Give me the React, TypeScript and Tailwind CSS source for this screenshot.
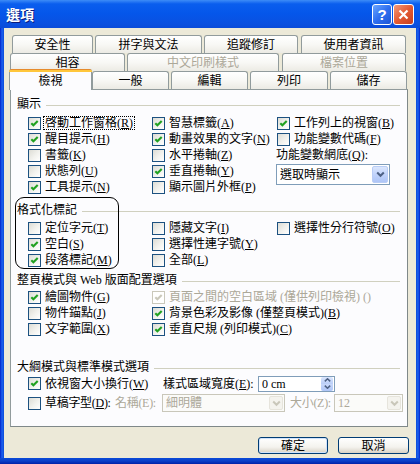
import React from "react";

type OptProps = {
  label: string;
  acc?: string;
  checked?: boolean;
  disabled?: boolean;
  focus?: boolean;
  tail?: string;
};

function Check({ checked = false, disabled = false }: { checked?: boolean; disabled?: boolean }) {
  return (
    <span
      className={
        disabled
          ? "flex h-[13px] w-[13px] shrink-0 items-center justify-center border border-[#cac8bb] bg-white"
          : "flex h-[13px] w-[13px] shrink-0 items-center justify-center border border-[#1c5180] bg-[linear-gradient(135deg,#dcdcd5_0%,#f2f2ee_55%,#ffffff_100%)]"
      }
    >
      {checked && (
        <svg width="11" height="11" viewBox="0 0 11 11">
          <path
            d="M2.3 5.2 L4.4 7.3 L8.7 3"
            fill="none"
            stroke={disabled ? "#cac8bb" : "#21a121"}
            strokeWidth="2.1"
          />
        </svg>
      )}
    </span>
  );
}

function Opt({ label, acc, checked, disabled, focus, tail }: OptProps) {
  const text = (
    <>
      {label}
      {acc ? (
        <>
          (<u>{acc}</u>)
        </>
      ) : null}
      {tail}
    </>
  );
  return (
    <div className="flex h-[16px] items-center whitespace-nowrap">
      <Check checked={checked} disabled={disabled} />
      {focus ? (
        <span className="ml-[2px] flex h-[14px] items-center border border-dotted border-black px-[1px] leading-[12px]">
          {text}
        </span>
      ) : (
        <span className={disabled ? "ml-[4px] text-[#aca899]" : "ml-[4px] text-black"}>{text}</span>
      )}
    </div>
  );
}

function GroupLabel({ text }: { text: string }) {
  return (
    <div className="flex h-[16px] items-center pl-[6px] pr-[7px]">
      <span className="whitespace-nowrap">{text}</span>
      <div className="ml-[5px] mt-[2px] h-px flex-1 bg-[#d0d0bf]" />
    </div>
  );
}

function Chevron({ color }: { color: string }) {
  return (
    <svg width="9" height="7" viewBox="0 0 9 7">
      <path d="M1.2 1.5 L4.5 4.8 L7.8 1.5" fill="none" stroke={color} strokeWidth="2" />
    </svg>
  );
}

function Tab({ label, className, grey }: { label: string; className: string; grey?: boolean }) {
  return (
    <div
      className={`flex h-[18px] shrink-0 items-center justify-center rounded-t-[3px] border border-b-0 border-[#919b9c] bg-[linear-gradient(180deg,#ffffff_0%,#f8f8f5_50%,#ecebe4_100%)] ${
        grey ? "text-[#aca899]" : "text-black"
      } ${className}`}
    >
      {label}
    </div>
  );
}

export default function App() {
  return (
    <div className="flex h-[464px] w-[420px] flex-col overflow-hidden bg-[#0b4fe0] font-['Liberation_Serif','Noto_Sans_CJK_TC','Noto_Sans_CJK_SC',serif] text-[12px] leading-[16px] text-black">
      {/* Title bar */}
      <div className="flex h-[28px] shrink-0 items-center bg-[linear-gradient(180deg,#3d8cf7_0%,#0a5eee_14%,#0556ea_50%,#0a50e0_85%,#0a4bd9_100%)] pl-[6px] pr-[6px]">
        <span className="font-['Noto_Sans_CJK_TC',sans-serif] text-[14px] font-bold leading-[16px] text-white [text-shadow:1px_1px_0_#0a1a7a]">
          選項
        </span>
        <div className="flex-1" />
        <div className="flex h-[21px] w-[20px] items-center justify-center rounded-[3px] border border-white bg-[linear-gradient(135deg,#6aa6ff_0%,#2f6ff0_50%,#1c55d6_100%)]">
          <span className="font-['Liberation_Sans',sans-serif] text-[15px] font-bold leading-[15px] text-white">?</span>
        </div>
        <div className="ml-[1px] flex h-[21px] w-[21px] items-center justify-center rounded-[3px] border border-white bg-[linear-gradient(135deg,#f39a7a_0%,#e35a33_50%,#c8401f_100%)]">
          <svg width="11" height="11" viewBox="0 0 11 11">
            <path d="M1.5 1.5 L9.5 9.5 M9.5 1.5 L1.5 9.5" stroke="#ffffff" strokeWidth="2.2" />
          </svg>
        </div>
      </div>

      {/* Middle */}
      <div className="flex h-[430px] shrink-0">
        <div className="w-[4px] bg-[linear-gradient(90deg,#0021c8,#1c61ef_50%,#0a4ad8)]" />
        <div className="flex w-[412px] flex-col bg-[#ece9d8] pt-[7px]">
          {/* Tab row 1 */}
          <div className="flex h-[18px]">
            <Tab label="安全性" className="ml-[8px] w-[81px]" />
            <Tab label="拼字與文法" className="ml-[2px] w-[107px]" />
            <Tab label="追蹤修訂" className="ml-[2px] w-[94px]" />
            <Tab label="使用者資訊" className="ml-[3px] w-[105px]" />
          </div>
          {/* Tab row 2 */}
          <div className="flex h-[18px]">
            <Tab label="相容" className="ml-[6px] w-[115px]" />
            <Tab label="中文印刷樣式" className="ml-[2px] w-[152px]" grey />
            <Tab label="檔案位置" className="ml-[3px] w-[124px]" grey />
          </div>
          {/* Tab row 3 */}
          <div className="flex h-[18px] items-end">
            <div className="relative z-10 -mb-px ml-[5px] flex h-[21px] w-[83px] shrink-0 flex-col rounded-t-[3px] border border-b-0 border-[#919b9c] bg-[#fcfcfe]">
              <div className="-mx-px -mt-px h-[3px] rounded-t-[3px] bg-[linear-gradient(180deg,#e68b2c_0%,#e68b2c_34%,#ffc73c_34%,#ffc73c_100%)]" />
              <div className="flex flex-1 items-center justify-center">檢視</div>
            </div>
            <Tab label="一般" className="w-[77px]" />
            <Tab label="編輯" className="ml-[2px] w-[77px]" />
            <Tab label="列印" className="ml-[2px] w-[78px]" />
            <Tab label="儲存" className="ml-[2px] w-[77px]" />
          </div>

          {/* Panel */}
          <div className="relative ml-[6px] flex h-[338px] w-[398px] flex-col border border-[#919b9c] border-r-[#7f8889] border-b-[#7f8889] bg-[#fcfcfe]">
            {/* 顯示 */}
            <div className="mt-[6px]">
              <GroupLabel text="顯示" />
            </div>
            <div className="mt-[3px] grid grid-cols-[124px_125px_1fr] pl-[17px]">
              <div className="flex flex-col">
                <Opt label="啓動工作窗格" acc="R" checked focus />
                <Opt label="醒目提示" acc="H" checked />
                <Opt label="書籤" acc="K" />
                <Opt label="狀態列" acc="U" />
                <Opt label="工具提示" acc="N" checked />
              </div>
              <div className="flex flex-col">
                <Opt label="智慧標籤" acc="A" checked />
                <Opt label="動畫效果的文字" acc="N" checked />
                <Opt label="水平捲軸" acc="Z" />
                <Opt label="垂直捲軸" acc="Y" checked />
                <Opt label="顯示圖片外框" acc="P" />
              </div>
              <div className="flex flex-col">
                <Opt label="工作列上的視窗" acc="B" checked />
                <Opt label="功能變數代碼" acc="F" />
                <div className="-ml-px flex h-[16px] items-center whitespace-nowrap">
                  功能變數網底(<u>Q</u>):
                </div>
                <div className="-ml-px mt-[1px] flex h-[21px] w-[114px] items-center border border-[#7f9db9] bg-white">
                  <span className="flex-1 whitespace-nowrap pl-[3px]">選取時顯示</span>
                  <span className="mr-px flex h-[17px] w-[16px] items-center justify-center rounded-[2px] border border-[#b9cdf6] bg-[linear-gradient(180deg,#dbe6fd_0%,#c1d3fb_50%,#aec5f7_100%)]">
                    <Chevron color="#4d6185" />
                  </span>
                </div>
              </div>
            </div>

            {/* 格式化標記 */}
            <div className="mt-[7px]">
              <GroupLabel text="格式化標記" />
            </div>
            <div className="mt-[2px] grid grid-cols-[124px_125px_1fr] pl-[17px]">
              <div className="flex flex-col">
                <Opt label="定位字元" acc="T" />
                <Opt label="空白" acc="S" checked />
                <Opt label="段落標記" acc="M" checked />
              </div>
              <div className="flex flex-col">
                <Opt label="隱藏文字" acc="I" />
                <Opt label="選擇性連字號" acc="Y" />
                <Opt label="全部" acc="L" />
              </div>
              <div className="flex flex-col">
                <Opt label="選擇性分行符號" acc="O" />
              </div>
            </div>

            {/* 整頁模式 */}
            <div className="mt-[4px]">
              <GroupLabel text="整頁模式與 Web 版面配置選項" />
            </div>
            <div className="mt-[1px] grid grid-cols-[124px_1fr] pl-[17px]">
              <div className="flex flex-col">
                <Opt label="繪圖物件" acc="G" checked />
                <Opt label="物件錨點" acc="J" />
                <Opt label="文字範圍" acc="X" />
              </div>
              <div className="flex flex-col">
                <Opt label="頁面之間的空白區域 (僅供列印檢視) ()" checked disabled />
                <Opt label="背景色彩及影像 (僅整頁模式)" acc="B" checked />
                <Opt label="垂直尺規 (列印模式)" acc="C" checked />
              </div>
            </div>

            {/* 大綱模式 */}
            <div className="mt-[22px]">
              <GroupLabel text="大綱模式與標準模式選項" />
            </div>
            <div className="flex h-[17px] items-center pl-[17px]">
              <div className="w-[135px] shrink-0">
                <Opt label="依視窗大小換行" acc="W" checked />
              </div>
              <span className="w-[95px] shrink-0 whitespace-nowrap">
                樣式區域寬度(<u>E</u>):
              </span>
              <div className="flex h-[16px] w-[77px] items-center border border-[#7f9db9] bg-white">
                <span className="flex-1 whitespace-nowrap pl-[3px] leading-[14px]">0 cm</span>
                <div className="mr-px flex h-[14px] w-[12px] flex-col">
                  <div className="flex h-[7px] items-center justify-center rounded-t-[2px] bg-[linear-gradient(180deg,#dbe6fd,#b9cdf8)]">
                    <svg width="7" height="4" viewBox="0 0 7 4">
                      <path d="M0.8 3.4 L3.5 0.8 L6.2 3.4" fill="none" stroke="#4d6185" strokeWidth="1.5" />
                    </svg>
                  </div>
                  <div className="flex h-[7px] items-center justify-center rounded-b-[2px] bg-[linear-gradient(180deg,#c8d8fb,#aec5f7)]">
                    <svg width="7" height="4" viewBox="0 0 7 4">
                      <path d="M0.8 0.6 L3.5 3.2 L6.2 0.6" fill="none" stroke="#4d6185" strokeWidth="1.5" />
                    </svg>
                  </div>
                </div>
              </div>
            </div>
            <div className="mt-[2px] flex h-[18px] items-center pl-[17px]">
              <div className="w-[87px] shrink-0 tracking-[-0.3px]">
                <Opt label="草稿字型" acc="D" tail=":" />
              </div>
              <span className="w-[47px] shrink-0 whitespace-nowrap tracking-[-0.3px] text-[#aca899]">名稱(E):</span>
              <div className="flex h-[18px] w-[123px] shrink-0 items-center border border-[#c9c7ba] bg-[#fbfbf9] text-[#aca899]">
                <span className="flex-1 whitespace-nowrap pl-[3px]">細明體</span>
                <span className="mr-px flex h-[14px] w-[14px] items-center justify-center rounded-[2px] border border-[#e6e4dc] bg-[#f4f3ee]">
                  <Chevron color="#c9c7ba" />
                </span>
              </div>
              <span className="ml-[5px] w-[44px] shrink-0 whitespace-nowrap tracking-[-0.3px] text-[#aca899]">大小(Z):</span>
              <div className="flex h-[18px] w-[69px] shrink-0 items-center border border-[#c9c7ba] bg-[#fbfbf9] text-[#aca899]">
                <span className="flex-1 whitespace-nowrap pl-[3px]">12</span>
                <span className="mr-px flex h-[14px] w-[14px] items-center justify-center rounded-[2px] border border-[#e6e4dc] bg-[#f4f3ee]">
                  <Chevron color="#c9c7ba" />
                </span>
              </div>
            </div>

            {/* annotation ring */}
            <div className="pointer-events-none absolute left-[4px] top-[107px] h-[72px] w-[104px] rounded-[9px] border-[1.5px] border-black" />
          </div>

          {/* Buttons */}
          <div className="mt-[10px] flex justify-end pr-[7px]">
            <button className="flex h-[17px] w-[70px] items-center justify-center rounded-[3px] border border-[#003c74] bg-[linear-gradient(180deg,#ffffff_0%,#f4f3ee_60%,#d8d2c6_100%)] shadow-[inset_0_0_0_1px_#cfe2fb]">
              確定
            </button>
            <button className="ml-[10px] flex h-[17px] w-[71px] items-center justify-center rounded-[3px] border border-[#003c74] bg-[linear-gradient(180deg,#ffffff_0%,#f4f3ee_60%,#d8d2c6_100%)]">
              取消
            </button>
          </div>
        </div>
        <div className="w-[4px] bg-[linear-gradient(90deg,#0a4ad8,#1c61ef_50%,#0021c8)]" />
      </div>

      {/* bottom frame */}
      <div className="h-[6px] shrink-0 bg-[linear-gradient(180deg,#0a4ad8,#0a3fc8_50%,#0021a8)]" />
    </div>
  );
}
